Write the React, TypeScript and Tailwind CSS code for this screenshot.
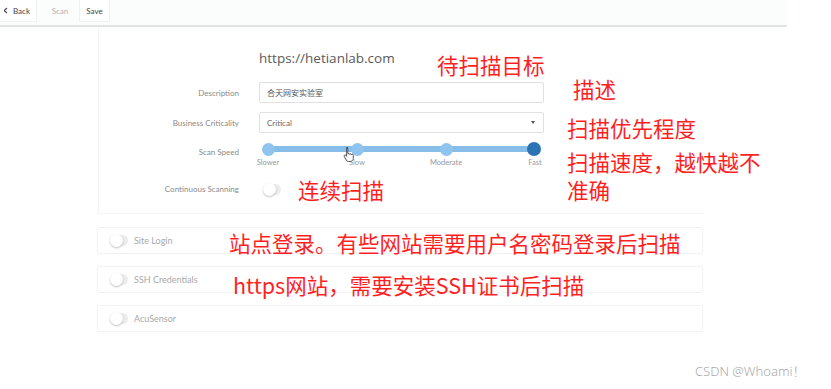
import { ChevronLeft } from "lucide-react";

const note = "absolute text-[#ff1f1f] text-[21.5px] leading-[26px] whitespace-nowrap font-['Noto_Sans_CJK_SC',sans-serif]";

const Toggle = () => (
  <div className="w-[18px] h-[11px] rounded-full bg-[#ececec] relative">
    <div className="absolute left-0 top-[-1px] w-[13px] h-[13px] rounded-full bg-white shadow-[0_1px_2px_rgba(0,0,0,0.25)]" />
  </div>
);

const Row = ({ label, children, h }: { label: string; children: React.ReactNode; h: string }) => (
  <div className={`flex items-center ${h}`}>
    <div className="w-[142px] pr-[2px] text-right text-[8px] text-[#8a8a8a]">{label}</div>
    <div className="ml-[18px] w-[285px]">{children}</div>
  </div>
);

const Card = ({ label }: { label: string }) => (
  <div className="h-[27px] w-[606px] border border-[#f1f3f3] rounded-[2px] flex items-center pl-[12px] gap-[6px]">
    <Toggle />
    <span className="text-[9px] text-[#a9a9a9]">{label}</span>
  </div>
);

const speeds = [
  { name: "Slower", x: 0 },
  { name: "Slow", x: 89 },
  { name: "Moderate", x: 178 },
  { name: "Fast", x: 266 },
];

export default function App() {
  return (
    <div className="w-[831px] h-[389px] relative bg-white overflow-hidden font-['Lato','Open_Sans',sans-serif]">
      {/* toolbar */}
      <div className="w-[787px] h-[27px] bg-[#fbfcfc] border-b-2 border-[#dfe3e3] flex items-start text-[8px]">
        <div className="h-[22px] w-[37px] bg-white border-r border-b border-[#f0f2f2] flex items-center pl-[1px] text-[#444]">
          <ChevronLeft size={9} strokeWidth={3} />
          <span className="ml-[3px]">Back</span>
        </div>
        <div className="h-[22px] w-[36px] ml-[5px] flex items-center justify-center text-[#b5b5b5]">Scan</div>
        <div className="h-[22px] w-[31px] ml-[1px] bg-white border-x border-b border-[#f0f2f2] flex items-center justify-center text-[#444]">
          Save
        </div>
      </div>

      {/* main form panel */}
      <div className="ml-[98px] w-[605px] h-[187px] border-l border-b border-[#f3f4f4] pt-[22px]">
        <div className="ml-[160px] h-[18px] text-[13.5px] leading-[18px] text-[#5a5a5a] font-['Open_Sans',sans-serif]">
          https://hetianlab.com
        </div>
        <div className="mt-[15px] flex flex-col">
          <Row label="Description" h="h-[21px]">
            <div className="h-[21px] border border-[#e0e0e0] rounded-[2px] flex items-center pl-[7px] text-[8px] text-[#555] font-['Noto_Sans_CJK_SC',sans-serif]">
              合天网安实验室
            </div>
          </Row>
          <Row label="Business Criticality" h="h-[21px] mt-[9px]">
            <div className="h-[21px] border border-[#e0e0e0] rounded-[2px] flex items-center justify-between pl-[7px] pr-[8px] text-[8px] text-[#666]">
              <span>Critical</span>
              <span className="w-0 h-0 border-x-[2.5px] border-x-transparent border-t-[3px] border-t-[#555]" />
            </div>
          </Row>
          <Row label="Scan Speed" h="h-[22px] mt-[8px]">
            <div className="relative h-[22px] w-[285px]">
              <div className="absolute left-[9px] top-[5px] w-[266px] h-[6px] rounded-full bg-[#86bde9]" />
              {speeds.map((s, i) => (
                <div key={s.name}>
                  <div
                    className={`absolute rounded-full ${i === 3 ? "bg-[#2b73b3] w-[14px] h-[14px] top-[1px]" : "bg-[#8fc4ee] w-[13px] h-[13px] top-[1.5px]"}`}
                    style={{ left: 9 + s.x - (i === 3 ? 7 : 6.5) }}
                  />
                  <div
                    className="absolute top-[16px] text-[7.5px] text-[#999] -translate-x-1/2"
                    style={{ left: 9 + s.x + (i === 3 ? 1 : 0) }}
                  >
                    {s.name}
                  </div>
                </div>
              ))}
              {/* cursor */}
              <svg className="absolute left-[84px] top-[5px]" width="12" height="16" viewBox="0 0 10 13">
                <path
                  d="M3 1.2c.6 0 1 .4 1 1V6l.3-.1c.5 0 .9.3.9.8v.1c.2-.4.5-.6.9-.6.5 0 .8.4.8.9.2-.3.5-.5.8-.5.5 0 .9.4.9.9v2.6c0 1.4-1.1 2.6-2.5 2.6H4.6c-.8 0-1.4-.4-1.9-1L1.1 8.5c-.3-.4-.2-.9.2-1.1.4-.2.8-.1 1.1.2l.6.8V2.2c0-.6.4-1 1-1z"
                  fill="#fff"
                  stroke="#333"
                  strokeWidth="0.7"
                />
              </svg>
            </div>
          </Row>
          <Row label="Continuous Scanning" h="h-[18px] mt-[17px]">
            <div className="pl-[4px]">
              <Toggle />
            </div>
          </Row>
        </div>
      </div>

      {/* option cards */}
      <div className="ml-[97px] mt-[13px] flex flex-col gap-[12px]">
        <Card label="Site Login" />
        <Card label="SSH Credentials" />
        <Card label="AcuSensor" />
      </div>

      {/* annotations */}
      <div className={`${note} left-[437px] top-[52px]`}>待扫描目标</div>
      <div className={`${note} left-[573px] top-[76px]`}>描述</div>
      <div className={`${note} left-[567px] top-[115px]`}>扫描优先程度</div>
      <div className={`${note} left-[567px] top-[148px] leading-[28px]`}>
        扫描速度，越快越不
        <br />
        准确
      </div>
      <div className={`${note} left-[298px] top-[177px]`}>连续扫描</div>
      <div className={`${note} left-[229px] top-[230px]`}>站点登录。有些网站需要用户名密码登录后扫描</div>
      <div className={`${note} left-[233px] top-[272px]`}>https网站，需要安装SSH证书后扫描</div>

      <div className="absolute left-[695px] top-[362px] text-[13px] font-light text-[#aaaaaa] font-['Noto_Sans','Noto_Sans_CJK_SC',sans-serif]">
        CSDN @Whoami！
      </div>
    </div>
  );
}
